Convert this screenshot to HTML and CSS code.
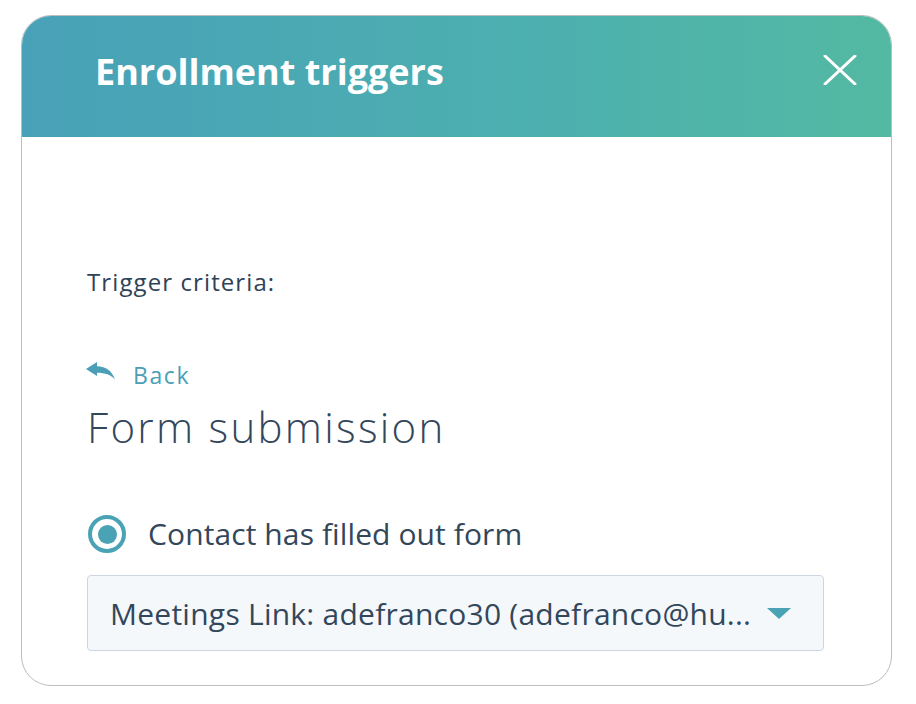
FILE: index.html
```html
<!DOCTYPE html>
<html>
<head>
<meta charset="utf-8">
<link rel="stylesheet" href="styles.css">
</head>
<body>
<div class="card">
  <div class="header">
    <h1 class="title">Enrollment triggers</h1>
    <svg class="close" width="34" height="30" viewBox="0 0 34 30"><path d="M2 1 L32 29 M32 1 L2 29" stroke="#fff" stroke-width="3" stroke-linecap="round"/></svg>
  </div>
  <div class="content">
    <div class="criteria">Trigger criteria:</div>
    <a class="back">
      <svg class="back-icon" width="29" height="18" viewBox="0 0 29 18"><path d="M0 7 L11 0 L11 4.2 C20 4.2 26 9 29 17.5 C25 12.8 19 10.8 11 10.8 L11 14 Z" fill="#4a9fb6"/></svg>
      <span>Back</span>
    </a>
    <h2 class="heading">Form submission</h2>
    <div class="radio-row">
      <span class="radio"><span class="dot"></span></span>
      <span class="radio-label">Contact has filled out form</span>
    </div>
    <div class="select">
      <span class="select-text">Meetings Link: adefranco30 (adefranco@hu...</span>
      <svg class="caret" width="24" height="11" viewBox="0 0 24 11"><path d="M0 0 L24 0 L12 11 Z" fill="#4aa3b5"/></svg>
    </div>
  </div>
</div>
</body>
</html>
```
FILE: styles.css
```css
html, body {
  margin: 0;
  padding: 0;
  background: #fff;
}
body {
  padding: 15px 0 0 21px;
  font-family: "Open Sans", Lato, sans-serif;
  color: #33475b;
}
.card {
  width: 869px;
  height: 669px;
  border: 1px solid #bdbdbd;
  border-radius: 30px;
  overflow: hidden;
  background: #fff;
}
.header {
  height: 121px;
  background: linear-gradient(90deg, #48a1b8 0%, #4db0af 60%, #53b9a2 100%);
  display: flex;
  align-items: flex-start;
  justify-content: space-between;
  padding: 0 34px 0 73px;
  box-sizing: border-box;
}
.title {
  margin: 32px 0 0 0;
  font-family: "Open Sans", sans-serif;
  font-weight: 700;
  font-size: 36px;
  line-height: 48px;
  color: #fff;
}
.close {
  margin-top: 39px;
}
.content {
  padding: 132px 67px 0 65px;
}
.criteria {
  font-size: 24px;
  font-weight: 500;
  line-height: 26px;
  letter-spacing: 1.1px;
  color: #2f4356;
}
.back {
  display: flex;
  align-items: center;
  gap: 18px;
  margin-top: 66px;
  color: #4a9fb6;
  font-size: 23px;
  line-height: 28px;
  letter-spacing: 1.6px;
}
.back-icon {
  margin-left: -1px;
  margin-top: -8px;
}
.heading {
  margin: 12px 0 0 0;
  font-weight: 300;
  font-size: 42px;
  line-height: 52px;
  letter-spacing: 2.3px;
  color: #33475b;
}
.radio-row {
  display: flex;
  align-items: center;
  gap: 22px;
  margin-top: 62px;
  height: 38px;
}
.radio {
  width: 38px;
  height: 38px;
  box-sizing: border-box;
  border: 4px solid #4aa3b5;
  border-radius: 50%;
  display: flex;
  align-items: center;
  justify-content: center;
  margin-left: 1px;
  flex: none;
}
.dot {
  width: 19px;
  height: 19px;
  border-radius: 50%;
  background: #4aa3b5;
}
.radio-label {
  font-size: 30px;
  line-height: 38px;
  letter-spacing: 0.1px;
}
.select {
  margin-top: 22px;
  height: 76px;
  box-sizing: border-box;
  background: #f5f8fa;
  border: 1px solid #cbd6e2;
  border-radius: 4px;
  display: flex;
  align-items: center;
  justify-content: space-between;
  padding: 0 32px 0 22px;
}
.select-text {
  font-size: 30px;
  white-space: nowrap;
  letter-spacing: 0.25px;
}
```
